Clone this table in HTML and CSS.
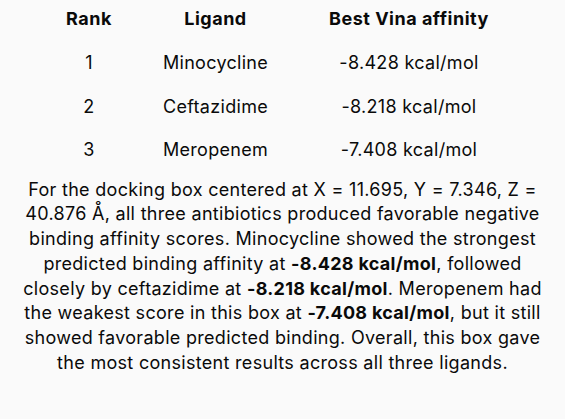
FILE: index.html
```html
<!DOCTYPE html>
<html lang="en">
<head>
<meta charset="utf-8">
<title>Docking results</title>
<link rel="stylesheet" href="styles.css">
</head>
<body>
<main class="result">
  <table class="scores">
    <thead>
      <tr><th>Rank</th><th>Ligand</th><th>Best Vina affinity</th></tr>
    </thead>
    <tbody>
      <tr><td>1</td><td>Minocycline</td><td>-8.428 kcal/mol</td></tr>
      <tr><td>2</td><td>Ceftazidime</td><td>-8.218 kcal/mol</td></tr>
      <tr><td>3</td><td>Meropenem</td><td>-7.408 kcal/mol</td></tr>
    </tbody>
  </table>
  <p class="summary">For the docking box centered at X = 11.695, Y = 7.346, Z =<br>
40.876 Å, all three antibiotics produced favorable negative<br>
binding affinity scores. Minocycline showed the strongest<br>
predicted binding affinity at <strong>-8.428 kcal/mol</strong>, followed<br>
closely by ceftazidime at <strong>-8.218 kcal/mol</strong>. Meropenem had<br>
the weakest score in this box at <strong>-7.408 kcal/mol</strong>, but it still<br>
showed favorable predicted binding. Overall, this box gave<br>
the most consistent results across all three ligands.</p>
</main>
</body>
</html>
```
FILE: styles.css
```css
html, body {
  background: #fafafa;
}
body {
  margin: 0 8px;
  font-family: Inter, "Open Sans", sans-serif;
  font-size: 18px;
  line-height: 24.75px;
  letter-spacing: 0.3px;
  color: #0a0a0a;
}
.scores {
  margin: 0 auto;
  width: 487px;
  table-layout: fixed;
  border-collapse: collapse;
}
.scores th:nth-child(1) { width: 100px; }
.scores th:nth-child(2) { width: 153px; }
.scores th:nth-child(3) { width: 234px; }
.scores th,
.scores td {
  padding: 9.5px 0;
  text-align: center;
  vertical-align: top;
}
.scores th {
  padding-top: 7px;
  font-weight: 700;
  letter-spacing: 0.5px;
}
.summary {
  margin: 5px 0 0;
  text-align: center;
  white-space: nowrap;
}
.summary strong {
  font-weight: 700;
}
```
